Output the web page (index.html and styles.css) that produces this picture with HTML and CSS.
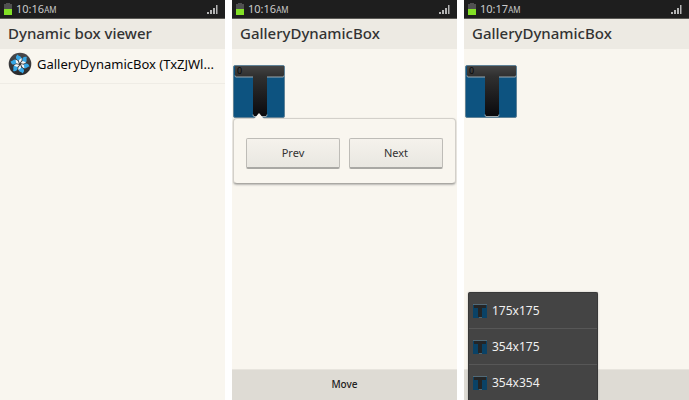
FILE: index.html
```html
<!DOCTYPE html>
<html lang="en">
<head>
<meta charset="utf-8">
<title>Dynamic box viewer</title>
<link rel="stylesheet" href="styles.css">
</head>
<body>
<svg width="0" height="0" class="defs" aria-hidden="true">
  <defs>
    <linearGradient id="tee" x1="0" y1="0" x2="0" y2="1">
      <stop offset="0" stop-color="#444"/><stop offset=".2" stop-color="#303030"/><stop offset="1" stop-color="#0a0a0d"/>
    </linearGradient>
    <linearGradient id="disc" x1="0" y1="0" x2="0" y2="1">
      <stop offset="0" stop-color="#4a4a4c"/><stop offset="1" stop-color="#29292b"/>
    </linearGradient>
    <symbol id="battery" viewBox="0 0 8 12">
      <path fill="#505050" d="M2 0h4v1h2v5H0V1h2z"/><path fill="#83e126" d="M0 6h8v6H0z"/>
    </symbol>
    <symbol id="signal" viewBox="0 0 11 9">
      <path fill="#b5b5b5" d="M0 7h2v2H0zM3 5h2v4H3zM6 3h2v6H6zM9 0h1.500v9H9z"/>
    </symbol>
    <symbol id="tbox" viewBox="0 0 52 53">
      <rect x=".5" y=".5" width="51" height="52" rx="1.500" fill="#0d5380" stroke="#5f8297"/>
      <path d="M2 1h49v11H34v38q0 1-1 1H21q-1 0-1-1V12H3q-1 0-1-1z" fill="url(#tee)"/>
      <path d="M2 10.500q0 1.500 1 1.500h17M34 12h16q1 0 1-1.500M20 49.500q0 2 1 2h12q1 0 1-2" fill="none" stroke="#9daab0"/>
    </symbol>
    <symbol id="tmini" viewBox="0 0 14 14">
      <path fill="#0a4266" d="M0 0h14v14H0z"/><path fill="#536a77" d="M0 0h14v1H0z"/>
      <path fill="#242526" d="M1 1h12v3H9v9H5V4H1z"/><path fill="#53646d" d="M6 13h3v1H6z"/>
    </symbol>
    <symbol id="pinwheel" viewBox="0 0 24 24">
      <circle cx="12" cy="12" r="11.300" fill="url(#disc)"/>
      <g id="b"><path fill="#36a7e6" d="M11 8.500C7.500 7.500 7 5 9.500 2.500c.5 1.500 3.500 1.500 4 3.500.3 1-1 2-2.500 2.500z"/><path fill="#f2f6f8" d="M11.500 11 10.800 8.300 13.500 6c.8 2-.2 3.500-2 5z"/></g>
      <use href="#b" transform="rotate(60 12 12)"/><use href="#b" transform="rotate(120 12 12)"/>
      <use href="#b" transform="rotate(180 12 12)"/><use href="#b" transform="rotate(240 12 12)"/>
      <use href="#b" transform="rotate(300 12 12)"/>
    </symbol>
  </defs>
</svg>
<main class="screens">
  <section class="screen">
    <div class="status"><svg class="battery"><use href="#battery"/></svg><span class="time">10:16<small>AM</small></span><svg class="signal"><use href="#signal"/></svg></div>
    <h1 class="title">Dynamic box viewer</h1>
    <a class="item" href="#"><svg class="app-icon"><use href="#pinwheel"/></svg><span class="item-name">GalleryDynamicBox (TxZJWl...</span></a>
  </section>

  <section class="screen">
    <div class="status"><svg class="battery"><use href="#battery"/></svg><span class="time">10:16<small>AM</small></span><svg class="signal"><use href="#signal"/></svg></div>
    <h1 class="title">GalleryDynamicBox</h1>
    <div class="content">
      <div class="box"><svg class="box-art"><use href="#tbox"/></svg><span class="count">0</span></div>
      <div class="popup">
        <button class="btn" type="button">Prev</button>
        <button class="btn" type="button">Next</button>
      </div>
    </div>
    <button class="toolbar" type="button">Move</button>
  </section>

  <section class="screen">
    <div class="status"><svg class="battery"><use href="#battery"/></svg><span class="time">10:17<small>AM</small></span><svg class="signal"><use href="#signal"/></svg></div>
    <h1 class="title">GalleryDynamicBox</h1>
    <div class="content">
      <div class="box"><svg class="box-art"><use href="#tbox"/></svg><span class="count">0</span></div>
    </div>
    <div class="toolbar"></div>
    <div class="menu">
      <button class="option" type="button"><svg class="mini"><use href="#tmini"/></svg>175x175</button>
      <button class="option" type="button"><svg class="mini"><use href="#tmini"/></svg>354x175</button>
      <button class="option" type="button"><svg class="mini"><use href="#tmini"/></svg>354x354</button>
    </div>
  </section>
</main>
</body>
</html>
```
FILE: styles.css
```css
* { box-sizing: border-box; }
body { margin: 0; background: #fff; font-family: "Noto Sans", "Open Sans", sans-serif; }
button { font-family: inherit; margin: 0; padding: 0; border: 0; }
svg { display: block; flex: none; }
.defs { position: absolute; }

.screens { display: grid; grid-template-columns: repeat(3, 1fr); gap: 7px; min-height: 100vh; }
.screen { position: relative; display: flex; flex-direction: column; min-width: 0; overflow: hidden; background: #f9f6ef; }

.status { display: flex; align-items: center; height: 19px; padding: 0 7px 0 4px; background: #1e1e1e; border-bottom: 1px solid #5a5955; color: #cbcbcb; }
.battery { width: 8px; height: 12px; }
.time { flex: 1; margin-left: 4px; font-size: 11px; line-height: 18px; }
.time small { font-size: 8px; }
.signal { width: 11px; height: 9px; }

.title { height: 30px; margin: 0; padding: 0 8px; background: #edeae3; color: #333; font-size: 15px; font-weight: 500; line-height: 28px; white-space: nowrap; }

.item { display: flex; align-items: center; gap: 5px; height: 35px; padding: 0 8px 4px; border-bottom: 1px solid #efece5; color: #080808; text-decoration: none; }
.app-icon { width: 24px; height: 24px; }
.item-name { font-size: 13px; line-height: 20px; white-space: nowrap; }

.content { flex: 1; padding: 16px 1px 0; }
.box { position: relative; width: 52px; height: 53px; }
.box-art { width: 52px; height: 53px; }
.count { position: absolute; left: 4px; top: 0; color: #080808; font-size: 9px; line-height: 11px; }

.popup { position: relative; display: flex; gap: 9px; padding: 19px 12px 14px; border: 1px solid #d3d0ca; border-bottom-color: #aaa8a3; border-radius: 4px; background: #f9f6ef; box-shadow: 0 1px 2px #8889; }
.popup::before { content: ""; position: absolute; left: 20px; top: -6px; border: 5px solid transparent; border-top: 0; border-bottom: 6px solid #f9f6ef; }
.btn { flex: 1; height: 31px; padding-bottom: 2px; border: 1px solid #bebcb7; border-bottom: 2px solid #a9a8a4; border-radius: 2px; background: linear-gradient(#f5f2ec, #e9e7e1); color: #333; font-size: 11px; }

.toolbar { height: 31px; padding-bottom: 2px; border-top: 1px solid #e8e5de; background: #dedbd4; color: #222; font-size: 10px; font-weight: 500; }

.menu { position: absolute; left: 4px; bottom: 0; width: 130px; border: 1px solid #383838; border-bottom: 0; border-radius: 2px 2px 0 0; background: #444; box-shadow: 0 0 2px #8888; }
.option { display: flex; align-items: center; gap: 5px; width: 100%; height: 36px; padding: 0 4px; border-bottom: 1px solid #575757; background: none; color: #f0f0f0; font-size: 12px; }
.option:last-child { height: 35px; border-bottom: 0; }
.mini { width: 14px; height: 14px; }
```
